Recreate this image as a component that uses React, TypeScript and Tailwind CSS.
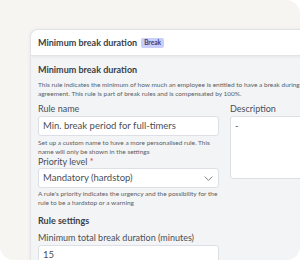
import React from "react";

export default function App() {
  return (
    <div className="w-[300px] h-[260px] bg-white" style={{ fontFamily: "Lato, 'Noto Sans', sans-serif" }}>
      <div className="w-full h-full bg-[#f7f5f2] rounded-tr-[14px] rounded-b-[14px] overflow-hidden pl-[30px] pt-[29px]">
        <div className="w-[300px] h-[260px] rounded-tl-[8px] bg-[#f2f4f6] border-l border-t border-[#e2e4e8] shadow-[0_0_4px_rgba(0,0,0,0.06)] overflow-hidden">
          <div className="h-[26px] bg-white border-b border-[#e2e4e8] shadow-[0_1px_3px_rgba(0,0,0,0.06)] flex items-center pl-[7px] gap-[4px]">
            <span className="text-[9px] leading-[12px] font-bold text-[#3a3f47]">Minimum break duration</span>
            <span className="bg-[#c9cefa] text-[#363b7c] text-[6.5px] font-bold rounded-[2px] px-[3px] h-[10px] flex items-center">Break</span>
          </div>
          <div className="pl-[7px] pt-[8px] text-[#4a4f57]">
            <div className="text-[9px] font-bold text-[#3a3f47] leading-[12px]">Minimum break duration</div>
            <div className="mt-[4px] text-[6.5px] leading-[9px] text-[#5a5f67] whitespace-nowrap">
              <div>This rule indicates the minimum of how much an employee is entitled to have a break during</div>
              <div>agreement. This rule is part of break rules and is compensated by 100%.</div>
            </div>
            <div className="flex gap-[11px] mt-[5px]">
              <div className="w-[181px] shrink-0">
                <div className="text-[9px] leading-[12px]">Rule name</div>
                <div className="mt-[1px] h-[20px] bg-white border border-[#dcdfe4] rounded-[3px] flex items-center px-[4px] text-[9.5px] text-[#4a4f57]">Min. break period for full-timers</div>
                <div className="mt-[2px] text-[6.5px] leading-[9px] text-[#5a5f67] whitespace-nowrap">
                  <div>Set up a custom name to have a more personalised rule. This</div>
                  <div>name will only be shown in the settings</div>
                </div>
                <div className="text-[9px] leading-[12px]">Priority level <span className="text-[#d9364b]">*</span></div>
                <div className="h-[20px] bg-white border border-[#dcdfe4] rounded-[3px] flex items-center justify-between pl-[4px] pr-[5px] text-[9.5px] text-[#4a4f57]">
                  <span>Mandatory (hardstop)</span>
                  <svg width="9" height="5" viewBox="0 0 9 5" fill="none">
                    <path d="M0.6 0.6 L4.5 4.3 L8.4 0.6" stroke="#70757e" strokeWidth="0.9" />
                  </svg>
                </div>
                <div className="mt-[1px] text-[6.5px] leading-[9px] text-[#5a5f67] whitespace-nowrap">
                  <div>A rule's priority indicates the urgency and the possibility for the</div>
                  <div>rule to be a hardstop or a warning</div>
                </div>
                <div className="mt-[8px] text-[9px] font-bold text-[#3a3f47] leading-[12px]">Rule settings</div>
                <div className="mt-[5px] text-[9px] leading-[12px] whitespace-nowrap">Minimum total break duration (minutes)</div>
                <div className="mt-[1px] h-[20px] bg-white border border-[#dcdfe4] rounded-[3px] flex items-center px-[4px] text-[9.5px] text-[#4a4f57]">15</div>
              </div>
              <div className="w-[100px] shrink-0">
                <div className="text-[9px] leading-[12px]">Description</div>
                <div className="mt-[1px] h-[63px] bg-white border border-[#dcdfe4] rounded-[3px] px-[4px] pt-[3px] text-[9.5px] leading-[12px] text-[#4a4f57]">-</div>
              </div>
            </div>
          </div>
        </div>
      </div>
    </div>
  );
}
